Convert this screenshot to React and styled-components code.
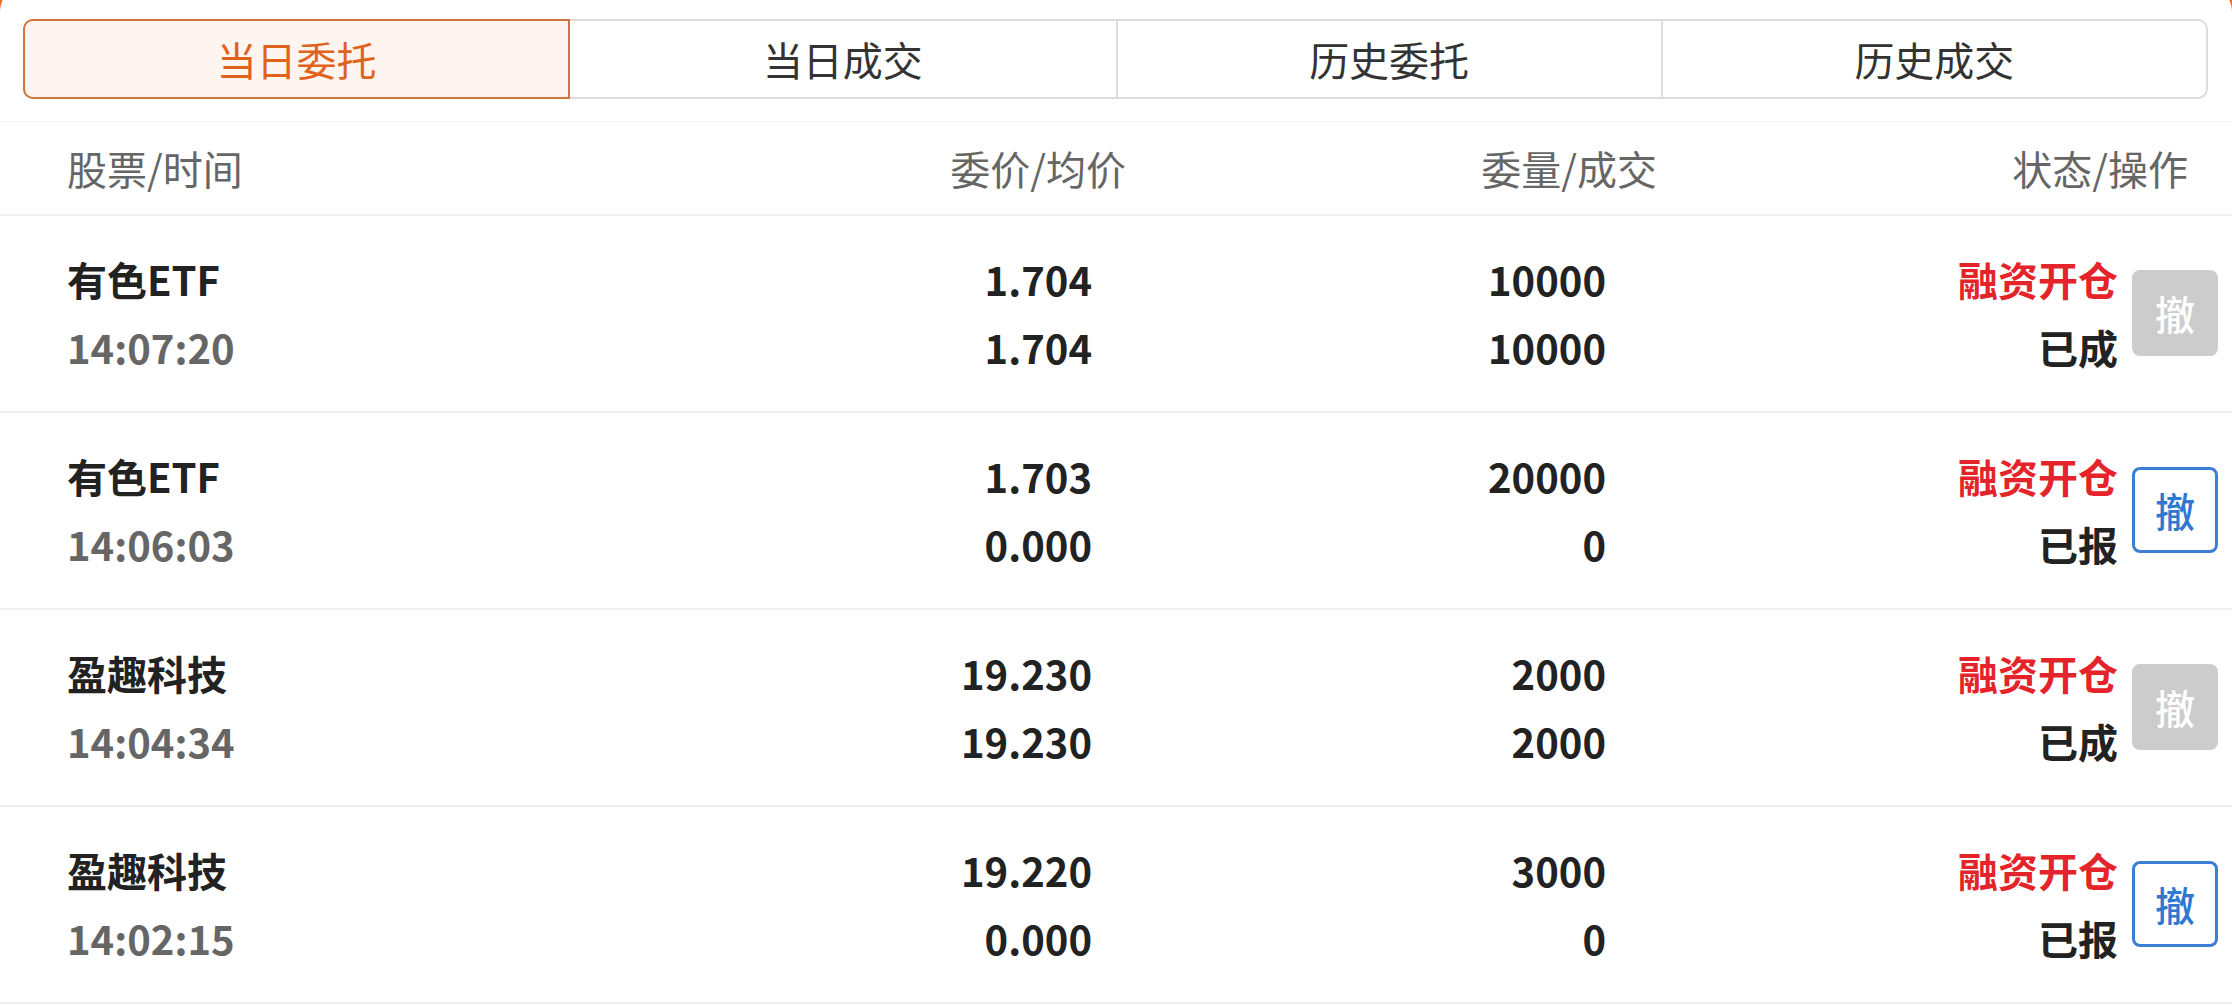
import React from 'react';
import styled, { createGlobalStyle } from 'styled-components';

const GlobalStyle = createGlobalStyle`
  html, body {
    margin: 0;
    padding: 0;
    background: #ee6a1f;
  }
  body {
    font-family: "Noto Sans CJK SC", "Noto Sans", sans-serif;
    overflow: hidden;
  }
`;

const Card = styled.div`
  background: #fff;
  margin-top: -16px;
  padding-top: 16px;
  border-radius: 28px 28px 0 0;
  min-height: 1006px;
`;

const Tabs = styled.div`
  display: grid;
  grid-template-columns: repeat(4, 1fr);
  margin: 19px 24px 0 23px;
  height: 80px;
  border: 2px solid #dcdcdc;
  border-radius: 10px;
  box-sizing: border-box;
`;

const Tab = styled.div`
  display: flex;
  align-items: center;
  justify-content: center;
  font-size: 40px;
  color: ${p => (p.$active ? '#e0621c' : '#333')};
  background: ${p => (p.$active ? '#fff5f0' : 'transparent')};
  border-left: ${p => (p.$first ? 'none' : '2px solid #dcdcdc')};
  margin: ${p => (p.$active ? '-2px 0 -2px -2px' : '0')};
  border: ${p => (p.$active ? '2px solid #d2743d' : undefined)};
  border-radius: ${p => (p.$active ? '10px 0 0 10px' : '0')};
`;

const HeaderRow = styled.div`
  display: grid;
  grid-template-columns: 1fr 434px 531px 531px;
  align-items: center;
  height: 92px;
  margin-top: 22px;
  padding: 0 44px 0 67px;
  border-top: 1px solid #f5f5f5;
  border-bottom: 2px solid #efefef;
  font-size: 40px;
  color: #666;
`;

const HeadCell = styled.div`
  text-align: ${p => (p.$left ? 'left' : 'right')};
`;

const Row = styled.div`
  display: grid;
  grid-template-columns: 1fr 400px 514px 512px 100px;
  align-items: center;
  box-sizing: border-box;
  height: 197px;
  padding: 0 14px 1px 67px;
  border-bottom: 2px solid #efefef;
`;

const Cell = styled.div`
  display: flex;
  flex-direction: column;
  align-items: ${p => (p.$left ? 'flex-start' : 'flex-end')};
`;

const Line = styled.span`
  font-size: 40px;
  line-height: 68px;
  font-weight: 700;
  white-space: nowrap;
  color: ${p => p.$color || '#222'};
`;

const CancelButton = styled.div`
  justify-self: end;
  width: 86px;
  height: 86px;
  box-sizing: border-box;
  border-radius: 8px;
  display: flex;
  align-items: center;
  justify-content: center;
  font-size: 40px;
  font-weight: 500;
  background: ${p => (p.$enabled ? '#fff' : '#cccccc')};
  color: ${p => (p.$enabled ? '#2f78d2' : '#fff')};
  border: 3px solid ${p => (p.$enabled ? '#3b7fd4' : '#cccccc')};
`;

const tabs = ['当日委托', '当日成交', '历史委托', '历史成交'];

const orders = [
  { name: '有色ETF', time: '14:07:20', price: '1.704', avg: '1.704', qty: '10000', deal: '10000', status: '已成' },
  { name: '有色ETF', time: '14:06:03', price: '1.703', avg: '0.000', qty: '20000', deal: '0', status: '已报' },
  { name: '盈趣科技', time: '14:04:34', price: '19.230', avg: '19.230', qty: '2000', deal: '2000', status: '已成' },
  { name: '盈趣科技', time: '14:02:15', price: '19.220', avg: '0.000', qty: '3000', deal: '0', status: '已报' },
];

export default function App() {
  return (
    <>
      <GlobalStyle />
      <Card>
        <Tabs>
          {tabs.map((t, i) => (
            <Tab key={t} $active={i === 0} $first={i === 0 || i === 1}>
              {t}
            </Tab>
          ))}
        </Tabs>
        <HeaderRow>
          <HeadCell $left>股票/时间</HeadCell>
          <HeadCell>委价/均价</HeadCell>
          <HeadCell>委量/成交</HeadCell>
          <HeadCell>状态/操作</HeadCell>
        </HeaderRow>
        {orders.map((o, i) => (
          <Row key={i}>
            <Cell $left>
              <Line>{o.name}</Line>
              <Line $color="#666">{o.time}</Line>
            </Cell>
            <Cell>
              <Line>{o.price}</Line>
              <Line>{o.avg}</Line>
            </Cell>
            <Cell>
              <Line>{o.qty}</Line>
              <Line>{o.deal}</Line>
            </Cell>
            <Cell>
              <Line $color="#e4242a">融资开仓</Line>
              <Line>{o.status}</Line>
            </Cell>
            <CancelButton $enabled={o.status === '已报'}>撤</CancelButton>
          </Row>
        ))}
      </Card>
    </>
  );
}
